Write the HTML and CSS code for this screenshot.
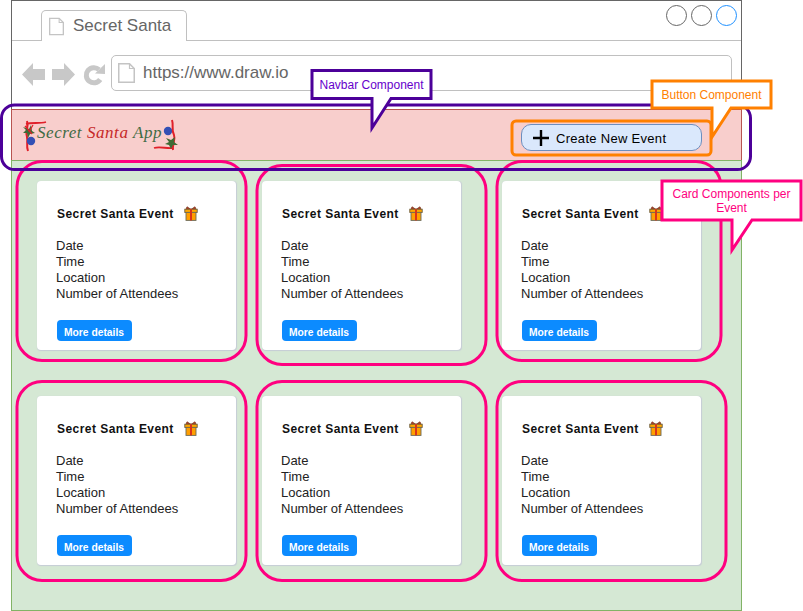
FILE: index.html
```html
<!DOCTYPE html>
<html lang="en">
<head>
  <meta charset="UTF-8" />
  <meta name="viewport" content="width=device-width, initial-scale=1.0" />
  <title>Secret Santa</title>
  <link rel="stylesheet" href="styles.css">
</head>
<body>
  <svg class="icon-defs" width="0" height="0">
    <defs>
      <symbol id="gift" viewBox="0 0 14 15">
        <path d="M3 .8 7 3.4 11 .8 12 3.4H2z" fill="#c0392b" stroke="#7a3b1e" stroke-width=".8"/>
        <rect x=".8" y="3.2" width="12.4" height="3.2" fill="#ffa800" stroke="#6b5a3a" stroke-width=".9"/>
        <rect x="2" y="6.4" width="10" height="8" fill="#ff9f00" stroke="#6b6b5a" stroke-width=".9"/>
        <rect x="6" y="3.2" width="2" height="11.2" fill="#d8341c"/>
      </symbol>
      <symbol id="page" viewBox="0 0 17 20">
        <path d="M.75.75H11.5L16.25 5.5V19.25H.75z" fill="#fff" stroke="#c4c4c4" stroke-width="1.5"/>
        <path d="M11.5.75V5.5H16.25" fill="none" stroke="#c4c4c4" stroke-width="1.2"/>
      </symbol>
    </defs>
  </svg>

  <div class="window">
    <div class="chrome">
      <div class="tabbar">
        <div class="tab">
          <svg class="tab-page"><use href="#page"/></svg>
          <span>Secret Santa</span>
        </div>
        <div class="win-buttons">
          <span class="win-btn"></span>
          <span class="win-btn"></span>
          <span class="win-btn win-btn-active"></span>
        </div>
      </div>
      <div class="toolbar">
        <svg class="nav-arrow" viewBox="0 0 23 23"><path d="M0 11.500 11 0V6H23V17H11V23z" fill="#c8c8c8"/></svg>
        <svg class="nav-arrow" viewBox="0 0 23 23"><path d="M23 11.500 12 0V6H0V17H12V23z" fill="#c8c8c8"/></svg>
        <svg class="nav-reload" viewBox="0 0 22 22">
          <path d="M17.200 15.500A7.600 7.600 0 1 1 16 5.600" fill="none" stroke="#c8c8c8" stroke-width="5"/>
          <path d="M12 9.500 22 10V0z" fill="#c8c8c8"/>
        </svg>
        <div class="address">
          <svg class="address-page"><use href="#page"/></svg>
          <span>https://www.draw.io</span>
        </div>
      </div>
    </div>

    <nav class="navbar">
      <svg class="logo" viewBox="0 0 160 34">
        <path d="M5 3C7 9 3 13 5 19 6 24 4 28 6 33" fill="none" stroke="#e0202a" stroke-width="2"/>
        <path d="M4 6C10 4 17 6 24 4" fill="none" stroke="#e0202a" stroke-width="1.800"/>
        <path d="M1 9 7 11 9 7 10 13 13 15 8 16 6 20 5 15 1 15 4 12z" fill="#3f6b35"/>
        <path d="M11 7 7 14M3 8 10 16" stroke="#e0202a" stroke-width="1.200"/>
        <circle cx="9" cy="23" r="4.200" fill="#3350b5"/>
        <text class="logo-text" x="15" y="20"><tspan class="logo-green">Secret</tspan> <tspan class="logo-red">Santa</tspan> <tspan class="logo-green">App</tspan></text>
        <circle cx="146" cy="13" r="4.200" fill="#3350b5"/>
        <path d="M150 2C152 8 149 12 152 17 154 22 150 26 151 32" fill="none" stroke="#e0202a" stroke-width="2"/>
        <path d="M132 30C138 28 145 31 151 30" fill="none" stroke="#e0202a" stroke-width="1.800"/>
        <path d="M144 20 149 22 153 19 152 24 156 27 151 27 149 31 147 27 143 26 147 24z" fill="#3f6b35"/>
      </svg>
      <button class="create-btn" type="button">
        <svg class="plus" viewBox="0 0 16 16"><path d="M8 0V16M0 8H16" stroke="#000" stroke-width="2.400"/></svg>
        <span>Create New Event</span>
      </button>
    </nav>

    <main class="events">
      <article class="card">
        <h3 class="card-title">Secret Santa Event <svg class="gift"><use href="#gift"/></svg></h3>
        <ul class="card-info"><li>Date</li><li>Time</li><li>Location</li><li>Number of Attendees</li></ul>
        <a class="details-btn">More details</a>
      </article>
      <article class="card">
        <h3 class="card-title">Secret Santa Event <svg class="gift"><use href="#gift"/></svg></h3>
        <ul class="card-info"><li>Date</li><li>Time</li><li>Location</li><li>Number of Attendees</li></ul>
        <a class="details-btn">More details</a>
      </article>
      <article class="card">
        <h3 class="card-title">Secret Santa Event <svg class="gift"><use href="#gift"/></svg></h3>
        <ul class="card-info"><li>Date</li><li>Time</li><li>Location</li><li>Number of Attendees</li></ul>
        <a class="details-btn">More details</a>
      </article>
      <article class="card">
        <h3 class="card-title">Secret Santa Event <svg class="gift"><use href="#gift"/></svg></h3>
        <ul class="card-info"><li>Date</li><li>Time</li><li>Location</li><li>Number of Attendees</li></ul>
        <a class="details-btn">More details</a>
      </article>
      <article class="card">
        <h3 class="card-title">Secret Santa Event <svg class="gift"><use href="#gift"/></svg></h3>
        <ul class="card-info"><li>Date</li><li>Time</li><li>Location</li><li>Number of Attendees</li></ul>
        <a class="details-btn">More details</a>
      </article>
      <article class="card">
        <h3 class="card-title">Secret Santa Event <svg class="gift"><use href="#gift"/></svg></h3>
        <ul class="card-info"><li>Date</li><li>Time</li><li>Location</li><li>Number of Attendees</li></ul>
        <a class="details-btn">More details</a>
      </article>
    </main>
  </div>

  <!-- annotations drawn on top of the mockup -->
  <svg class="marks" viewBox="0 0 803 611">
    <g class="mark-card">
      <rect x="17" y="161.500" width="229" height="199" rx="25"/>
      <rect x="257" y="165.500" width="229" height="199" rx="25"/>
      <rect x="497" y="161.500" width="224" height="199" rx="25"/>
      <rect x="17" y="381.500" width="229" height="199" rx="25"/>
      <rect x="257" y="381.500" width="229" height="199" rx="25"/>
      <rect x="497" y="381.500" width="229" height="199" rx="25"/>
    </g>
    <rect class="mark-nav" x="1.500" y="105" width="749" height="64.500" rx="13"/>
    <rect class="mark-btn" x="512" y="121" width="199" height="34" rx="4"/>

    <path class="callout callout-nav" d="M312 70.500H431V98.500H391L372 128V98.500H312z"/>
    <path class="callout callout-btn" d="M652 81H771V108H731L712 137V108H652z"/>
    <path class="callout callout-card" d="M662 181H801V220H752L732 250V220H662z"/>

    <text class="callout-text text-nav" x="371.500" y="89">Navbar Component</text>
    <text class="callout-text text-btn" x="711.500" y="99">Button Component</text>
    <text class="callout-text text-card" x="731.500" y="198">Card Components per</text>
    <text class="callout-text text-card" x="731.500" y="212">Event</text>
  </svg>
</body>
</html>
```

FILE: styles.css
```css
* { box-sizing: border-box; }

body {
  margin: 0;
  font-family: "Liberation Sans", Arial, sans-serif;
  background: #fff;
  color: #222;
}

.icon-defs { position: absolute; }

.window {
  margin-left: 11px;
  width: 731px;
  height: 611px;
  display: flex;
  flex-direction: column;
}

/* browser mockup */
.chrome {
  height: 109px;
  border: 1px solid #666;
  border-bottom: none;
}
.tabbar {
  height: 40px;
  padding: 9px 0 0 29px;
  border-bottom: 1px solid #c0c0c0;
  display: flex;
  justify-content: space-between;
}
.tab {
  width: 146px;
  height: 31px;
  display: flex;
  align-items: center;
  gap: 9px;
  padding-left: 7px;
  background: #fff;
  border: 1px solid #c0c0c0;
  border-bottom: none;
  border-radius: 5px 5px 0 0;
  color: #666;
  font-size: 17px;
}
.tab-page { width: 15px; height: 19px; }
.win-buttons {
  display: flex;
  gap: 4px;
  padding-right: 4px;
  margin-top: -5px;
}
.win-btn {
  width: 21px;
  height: 21px;
  border: 1px solid #666;
  border-radius: 50%;
}
.win-btn-active { border-color: #1e90ff; }
.toolbar {
  height: 68px;
  display: flex;
  align-items: flex-start;
  padding: 14px 9px 0 10px;
}
.nav-arrow { width: 23px; height: 23px; margin: 8px 7px 0 0; }
.nav-reload { width: 22px; height: 22px; margin: 9px 6px 0 1px; }
.address {
  flex: 1;
  height: 36px;
  display: flex;
  align-items: center;
  gap: 8px;
  padding-left: 6px;
  border: 1px solid #c0c0c0;
  border-radius: 5px;
  color: #666;
  font-size: 17px;
}
.address-page { width: 17px; height: 20px; }

/* navbar */
.navbar {
  height: 51px;
  display: flex;
  justify-content: space-between;
  align-items: center;
  padding: 0 39px 0 10px;
  background: #f8cecc;
  border: 1px solid #b85450;
  border-bottom: none;
}
.logo { width: 160px; height: 34px; }
.logo-text {
  font-family: "Liberation Serif", serif;
  font-style: italic;
  font-size: 17px;
  letter-spacing: 0.55px;
}
.logo-green { fill: #3f6b45; }
.logo-red { fill: #c62828; }
.create-btn {
  width: 181px;
  height: 27px;
  display: flex;
  align-items: center;
  gap: 7px;
  padding: 2px 0 0 11px;
  margin-top: 5px;
  background: #dae8fc;
  border: 1px solid #6c8ebf;
  border-radius: 10px;
  font: 13px "Liberation Sans", Arial, sans-serif;
  letter-spacing: 0.3px;
  color: #000;
}
.plus { width: 16px; height: 16px; margin-top: -2px; }

/* cards */
.events {
  flex: 1;
  display: grid;
  grid-template-columns: 225px 240px 199px;
  grid-auto-rows: 169px;
  row-gap: 46px;
  padding: 20px 0 0 25px;
  background: #d5e8d4;
  border: 1px solid #82b366;
}
.card {
  width: 199px;
  padding: 25px 0 0 20px;
  background: #fff;
  border-radius: 4px;
  box-shadow: 0.5px 0.5px 1px #c6ccd6;
}
.card-title {
  margin: 0;
  display: flex;
  align-items: center;
  gap: 10px;
  height: 15px;
  font-size: 12px;
  letter-spacing: 0.45px;
  color: #111;
}
.gift { width: 14px; height: 15px; }
.card-info {
  list-style: none;
  margin: 17px 0 18px -1px;
  padding: 0;
  font-size: 13px;
  line-height: 16px;
}
.details-btn {
  display: block;
  width: 75px;
  height: 21px;
  padding-right: 1px;
  line-height: 26px;
  text-align: center;
  background: #0c8bff;
  border-radius: 4px;
  color: #fff;
  font-size: 10.300px;
  font-weight: bold;
}

/* annotations */
.marks {
  position: absolute;
  top: 0;
  left: 0;
  width: 803px;
  height: 611px;
  pointer-events: none;
}
.mark-card rect { fill: none; stroke: #ff0080; stroke-width: 3; }
.mark-nav { fill: none; stroke: #4c0099; stroke-width: 3; }
.mark-btn { fill: none; stroke: #ff8000; stroke-width: 3; }
.callout { fill: #fff; stroke-width: 3; }
.callout-nav { stroke: #4c0099; }
.callout-btn { stroke: #ff8000; }
.callout-card { stroke: #ff0080; }
.callout-text {
  font-family: "Liberation Sans", Arial, sans-serif;
  font-size: 12px;
  text-anchor: middle;
}
.text-nav { fill: #6600cc; }
.text-btn { fill: #ff8000; }
.text-card { fill: #ff0080; }
```
